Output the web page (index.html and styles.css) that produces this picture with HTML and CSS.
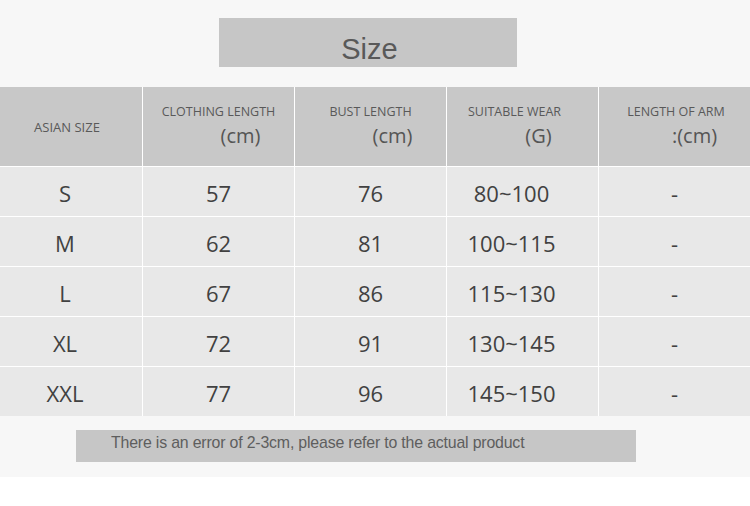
FILE: index.html
```html
<!DOCTYPE html>
<html>
<head>
<meta charset="utf-8">
<link rel="stylesheet" href="styles.css">
</head>
<body>
<div class="page">
  <div class="title">Size</div>
  <div class="table">
    <div class="cell head first"><span class="hl hl-first">ASIAN SIZE</span></div>
    <div class="cell head"><span class="hl">CLOTHING LENGTH</span><span class="unit u-cl">(cm)</span></div>
    <div class="cell head"><span class="hl">BUST LENGTH</span><span class="unit u-bl">(cm)</span></div>
    <div class="cell head"><span class="hl hl-sw">SUITABLE WEAR</span><span class="unit u-sw">(G)</span></div>
    <div class="cell head"><span class="hl hl-arm">LENGTH OF ARM</span><span class="unit u-arm">:(cm)</span></div>

    <div class="cell first">S</div><div class="cell">57</div><div class="cell">76</div><div class="cell wear">80~100</div><div class="cell">-</div>
    <div class="cell first">M</div><div class="cell">62</div><div class="cell">81</div><div class="cell wear">100~115</div><div class="cell">-</div>
    <div class="cell first">L</div><div class="cell">67</div><div class="cell">86</div><div class="cell wear">115~130</div><div class="cell">-</div>
    <div class="cell first">XL</div><div class="cell">72</div><div class="cell">91</div><div class="cell wear">130~145</div><div class="cell">-</div>
    <div class="cell first">XXL</div><div class="cell">77</div><div class="cell">96</div><div class="cell wear">145~150</div><div class="cell">-</div>
  </div>
  <div class="note"><span class="note-text">There is an error of 2-3cm, please refer to the actual product</span></div>
</div>
</body>
</html>
```
FILE: styles.css
```css
html, body {
  margin: 0;
  padding: 0;
  background: #ffffff;
}
.page {
  background: #f7f7f7;
  padding: 18px 0 15px 0;
  width: 750px;
}
.title {
  margin-left: 219px;
  width: 298px;
  height: 49px;
  box-sizing: border-box;
  padding-top: 16px;
  padding-left: 3px;
  background: #c6c6c6;
  color: #595959;
  font-family: "Liberation Sans", Arial, sans-serif;
  font-size: 29px;
  line-height: 30px;
  text-align: center;
}
.table {
  margin-top: 20px;
  display: grid;
  grid-template-columns: 142px repeat(4, 151px);
  grid-template-rows: 79px repeat(5, 49px);
  gap: 1px;
  background: #ffffff;
  font-family: "Open Sans", sans-serif;
  color: #414141;
}
.cell {
  background: #e8e8e8;
  display: flex;
  align-items: center;
  justify-content: center;
  font-size: 22px;
  padding-top: 2px;
  box-sizing: border-box;
}
.cell.first {
  padding-right: 12px;
}
.cell.wear {
  padding-right: 22px;
}
.cell.head {
  background: #c8c8c8;
  flex-direction: column;
  align-items: stretch;
  justify-content: flex-start;
  padding-top: 17px;
  color: #595959;
}
.cell.head.first {
  justify-content: center;
  padding-top: 0;
  padding-right: 8px;
}
.hl {
  display: block;
  font-size: 12.5px;
  line-height: 16px;
  text-align: center;
}
.hl-first {
  font-size: 13px;
}
.hl-sw {
  padding-right: 16px;
}
.hl-arm {
  padding-left: 3px;
}
.unit {
  display: block;
  font-size: 20px;
  line-height: 26px;
  margin-top: 3px;
  text-align: center;
  color: #555555;
}
.u-cl, .u-bl {
  padding-left: 44px;
}
.u-sw {
  padding-left: 32px;
}
.u-arm {
  padding-left: 40px;
}
.note {
  margin-top: 14px;
  margin-left: 76px;
  width: 560px;
  height: 32px;
  box-sizing: border-box;
  background: #c6c6c6;
  padding-left: 35px;
  color: #5e5e5e;
  font-family: "Liberation Sans", Arial, sans-serif;
  font-size: 17px;
  line-height: 26px;
  letter-spacing: -0.2px;
}
.note-text {
  display: inline-block;
  transform: scaleX(0.935);
  transform-origin: left center;
  white-space: nowrap;
}
```
